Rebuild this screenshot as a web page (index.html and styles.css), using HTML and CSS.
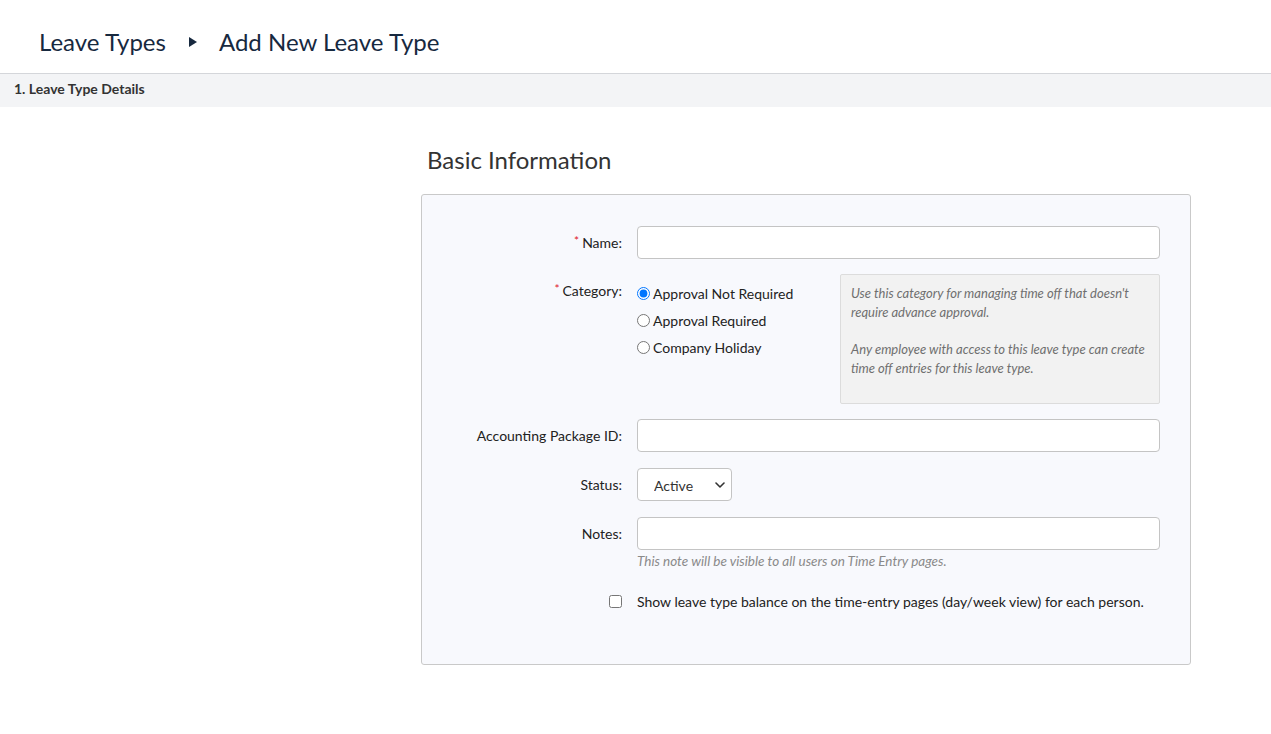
FILE: index.html
```html
<!DOCTYPE html>
<html lang="en">
<head>
    <meta charset="UTF-8">
    <meta name="viewport" content="width=device-width, initial-scale=1.0">
    <title>Add New Leave Type</title>
    <link rel="stylesheet" href="styles.css">
</head>
<body>
    <div class="page-header">
        <h1>
            <span>Leave Types</span>
            <span class="crumb-arrow"></span>
            <span>Add New Leave Type</span>
        </h1>
    </div>

    <div class="step-bar">1. Leave Type Details</div>

    <div class="content">
        <h2>Basic Information</h2>

        <div class="form-box">
            <div class="form-row tight">
                <label class="field-label" for="name"><span class="req">*</span>Name:</label>
                <div class="field"><input type="text" id="name" class="text-input"></div>
            </div>

            <div class="form-row tight">
                <label class="field-label label-top"><span class="req">*</span>Category:</label>
                <div class="field category">
                    <div class="radio-list">
                        <label class="radio"><input type="radio" name="category" checked>Approval Not Required</label>
                        <label class="radio"><input type="radio" name="category">Approval Required</label>
                        <label class="radio"><input type="radio" name="category">Company Holiday</label>
                    </div>
                    <div class="help-box">
                        <p>Use this category for managing time off that doesn't require advance approval.</p>
                        <p>Any employee with access to this leave type can create time off entries for this leave type.</p>
                    </div>
                </div>
            </div>

            <div class="form-row">
                <label class="field-label" for="acct">Accounting Package ID:</label>
                <div class="field"><input type="text" id="acct" class="text-input"></div>
            </div>

            <div class="form-row">
                <label class="field-label" for="status">Status:</label>
                <div class="field">
                    <div class="select-wrap">
                        <select id="status" class="select">
                            <option>Active</option>
                            <option>Inactive</option>
                        </select>
                        <svg class="chevron" width="10" height="6" viewBox="0 0 10 6">
                            <path d="M1 1l4 4 4-4" fill="none" stroke="#333" stroke-width="1.6" stroke-linecap="round" stroke-linejoin="round"/>
                        </svg>
                    </div>
                </div>
            </div>

            <div class="form-row notes-row">
                <label class="field-label" for="notes">Notes:</label>
                <div class="field">
                    <input type="text" id="notes" class="text-input">
                    <div class="hint">This note will be visible to all users on Time Entry pages.</div>
                </div>
            </div>

            <div class="form-row check-row">
                <div class="field-label"><input type="checkbox" id="balance" class="check"></div>
                <label class="field check-text" for="balance">Show leave type balance on the time-entry pages (day/week view) for each person.</label>
            </div>
        </div>
    </div>
</body>
</html>
```

FILE: styles.css
```css
body {
    margin: 0;
    font-family: Lato, "Open Sans", sans-serif;
    font-size: 14px;
    color: #222;
    background: #fff;
}
.page-header {
    height: 73px;
    border-bottom: 1px solid #d4d6da;
    padding-left: 39px;
    display: flex;
    align-items: center;
}
.page-header h1 {
    margin: 0 0 12px;
    font-size: 24px;
    font-weight: 400;
    color: #17293f;
    display: flex;
    align-items: center;
    position: relative;
    top: 11px;
}
.crumb-arrow {
    width: 0;
    height: 0;
    border-top: 5px solid transparent;
    border-bottom: 5px solid transparent;
    border-left: 8px solid #17293f;
    margin: 0 22px 0 23px;
}
.step-bar {
    background: #f3f4f6;
    height: 33px;
    line-height: 30px;
    padding-left: 14px;
    font-weight: 700;
    font-size: 14px;
    color: #333;
}
.content {
    padding-left: 421px;
    width: 770px;
}
.content h2 {
    margin: 38px 0 19px 6px;
    font-size: 24px;
    font-weight: 400;
    color: #333;
    line-height: 30px;
}
.form-box {
    border: 1px solid #c9c9c9;
    border-radius: 3px;
    background: #f8f9fd;
    padding: 31px 30px 54px 0;
}
.form-row {
    display: flex;
    margin-bottom: 16px;
}
.form-row.tight {
    margin-bottom: 15px;
}
.field-label {
    width: 200px;
    flex: none;
    margin-right: 15px;
    text-align: right;
    line-height: 33px;
}
.label-top {
    line-height: 17px;
    padding-top: 8px;
}
.req {
    color: #e0202a;
    font-size: 12px;
    vertical-align: top;
    margin-right: 3px;
    position: relative;
    top: -2px;
}
.field {
    flex: 1;
}
.text-input {
    box-sizing: border-box;
    width: 100%;
    height: 33px;
    border: 1px solid #c4c4c4;
    border-radius: 4px;
    background: #fff;
    font: inherit;
    padding: 0 8px;
    margin: 0;
}
.category {
    display: flex;
}
.radio-list {
    width: 203px;
    padding-top: 6px;
}
.radio {
    display: flex;
    align-items: center;
    height: 27px;
}
.radio input {
    width: 13px;
    height: 13px;
    margin: 0 3px 0 0;
}
.help-box {
    box-sizing: border-box;
    width: 320px;
    height: 130px;
    background: #f2f2f2;
    border: 1px solid #dcdcdc;
    border-radius: 2px;
    padding: 9px 10px;
    font-size: 13px;
    font-style: italic;
    line-height: 19px;
    color: #6f6f6f;
}
.help-box p {
    margin: 0 0 18px;
}
.select-wrap {
    position: relative;
    width: 95px;
}
.select {
    appearance: none;
    -webkit-appearance: none;
    box-sizing: border-box;
    width: 95px;
    height: 33px;
    border: 1px solid #c4c4c4;
    border-radius: 4px;
    background: #fff;
    font: inherit;
    color: #333;
    padding: 2px 0 0 16px;
    margin: 0;
}
.chevron {
    position: absolute;
    right: 7px;
    top: 14px;
    pointer-events: none;
}
.notes-row {
    margin-bottom: 0;
}
.hint {
    font-size: 13.5px;
    font-style: italic;
    color: #8a8a8a;
    margin-top: 3px;
    line-height: 17px;
}
.check-row {
    margin-top: 23px;
    margin-bottom: 0;
}
.check-row .field-label {
    line-height: 17px;
    display: flex;
    justify-content: flex-end;
    align-items: center;
}
.check {
    width: 13px;
    height: 13px;
    margin: 0;
}
.check-text {
    line-height: 17px;
}
```
